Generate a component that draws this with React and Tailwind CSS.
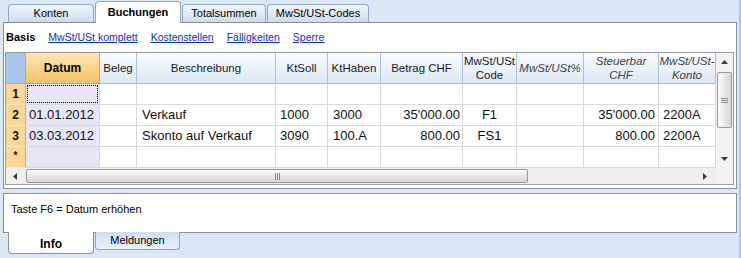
import React from "react";

function TriUp() {
  return (
    <svg width="7" height="4" viewBox="0 0 7 4"><path d="M3.5 0L7 4H0Z" fill="#3a3a3a" /></svg>
  );
}
function TriDown() {
  return (
    <svg width="7" height="4" viewBox="0 0 7 4"><path d="M0 0H7L3.5 4Z" fill="#3a3a3a" /></svg>
  );
}
function TriLeft() {
  return (
    <svg width="4" height="7" viewBox="0 0 4 7"><path d="M4 0V7L0 3.5Z" fill="#3a3a3a" /></svg>
  );
}
function TriRight() {
  return (
    <svg width="4" height="7" viewBox="0 0 4 7"><path d="M0 0V7L4 3.5Z" fill="#3a3a3a" /></svg>
  );
}

function HeaderRow() {
  const h =
    "shrink-0 h-full border-r border-b border-[#a9bfdc] bg-linear-to-b from-[#fafcfe] to-[#dce6f3] flex items-center justify-center text-center leading-[14px] text-[11.5px] text-[#1a1a1a]";
  const hi =
    "shrink-0 h-full border-r border-b border-[#a9bfdc] bg-linear-to-b from-[#fafcfe] to-[#dce6f3] flex items-center justify-center text-center leading-[14px] text-[11.5px] italic text-[#404040]";
  return (
    <div className="flex h-[31px]">
      <div className="w-[20px] shrink-0 h-full bg-[#a9c5ec] border-r border-b border-[#93b3de]" />
      <div className="w-[74px] shrink-0 h-full flex items-center justify-center font-bold text-[12px] bg-linear-to-b from-[#fde6b3] to-[#f6c161] border-r border-b border-[#f0993a]">
        Datum
      </div>
      <div className={`w-[37px] ${h}`}>Beleg</div>
      <div className={`w-[139px] ${h}`}>Beschreibung</div>
      <div className={`w-[52px] ${h}`}>KtSoll</div>
      <div className={`w-[53px] ${h}`}>KtHaben</div>
      <div className={`w-[82px] ${h}`}>Betrag CHF</div>
      <div className={`w-[54px] ${h}`}>
        MwSt/USt
        <br />
        Code
      </div>
      <div className={`w-[67px] ${hi}`}>MwSt/USt%</div>
      <div className={`w-[75px] ${hi}`}>
        Steuerbar
        <br />
        CHF
      </div>
      <div className={`w-[57px] ${hi}`}>
        MwSt/USt-
        <br />
        Konto
      </div>
    </div>
  );
}

function BodyRow({ n, datum = "", desc = "", soll = "", haben = "", betrag = "", code = "", steuer = "", konto = "", focus = false, star = false }) {
  const c = "shrink-0 h-full border-r border-b border-[#dadada] flex items-center whitespace-nowrap";
  return (
    <div className="flex h-[21px] text-[13px] text-[#111]">
      <div className="w-[20px] shrink-0 h-full flex items-center justify-center bg-[#fcd694] border-r border-r-[#f1a547] border-b border-b-[#fde7be] font-bold text-[12px]">
        {star ? <span className="text-[10px] -mt-[3px]">*</span> : n}
      </div>
      <div className={`w-[74px] ${c} bg-[#e6e6f6] border-b-[#d6d6e6] pl-[3px]`}>
        {focus ? <div className="self-stretch flex-1 -ml-[2px] my-px mr-px border border-dotted border-black" /> : datum}
      </div>
      <div className={`w-[37px] ${c}`} />
      <div className={`w-[139px] ${c} pl-[5px]`}>{desc}</div>
      <div className={`w-[52px] ${c} pl-[4px]`}>{soll}</div>
      <div className={`w-[53px] ${c} pl-[5px]`}>{haben}</div>
      <div className={`w-[82px] ${c} justify-end pr-[2px]`}>{betrag}</div>
      <div className={`w-[54px] ${c} justify-center`}>{code}</div>
      <div className={`w-[67px] ${c}`} />
      <div className={`w-[75px] ${c} justify-end pr-[3px]`}>{steuer}</div>
      <div className={`w-[57px] ${c} pl-[4px]`}>{konto}</div>
    </div>
  );
}

export default function App() {
  return (
    <div className="flex w-[741px] h-[258px] overflow-hidden bg-[#dce7f5] font-['Liberation_Sans',Arial,sans-serif] text-black">
      <div className="w-[739px] shrink-0 flex flex-col">
        {/* top tabs */}
        <div className="h-[22px] flex items-end pl-[8px] gap-[1px] text-[11px]">
          <div className="w-[86px] h-[18px] flex items-center justify-center rounded-t-[4px] border border-b-0 border-[#8ea6c8] bg-linear-to-b from-[#f3f7fc] to-[#cddbf0]">
            Konten
          </div>
          <div className="relative z-10 -mb-px w-[86px] h-[22px] flex items-center justify-center rounded-t-[4px] border border-b-0 border-[#9aa4b2] bg-white font-bold pb-[1px]">
            Buchungen
          </div>
          <div className="w-[84px] h-[18px] flex items-center justify-center rounded-t-[4px] border border-b-0 border-[#8ea6c8] bg-linear-to-b from-[#f3f7fc] to-[#cddbf0]">
            Totalsummen
          </div>
          <div className="w-[102px] h-[18px] flex items-center justify-center rounded-t-[4px] border border-b-0 border-[#8ea6c8] bg-linear-to-b from-[#f3f7fc] to-[#cddbf0]">
            MwSt/USt-Codes
          </div>
        </div>

        {/* main panel */}
        <div className="ml-[3px] w-[734px] h-[167px] shrink-0 border border-[#8d9196] bg-white flex flex-col">
          <div className="h-[29px] shrink-0 flex items-center pl-[2px] gap-[13px] text-[10.5px]">
            <span className="font-bold text-[11px]">Basis</span>
            <span className="text-[#0a2fd8] underline">MwSt/USt komplett</span>
            <span className="text-[#0a2fd8] underline">Kostenstellen</span>
            <span className="text-[#0a2fd8] underline">Fälligkeiten</span>
            <span className="text-[#0a2fd8] underline">Sperre</span>
          </div>

          {/* grid */}
          <div className="ml-px w-[729px] h-[133px] shrink-0 border border-[#9c9c9c] flex flex-col">
            <div className="flex h-[115px]">
              <div className="w-[710px] flex flex-col">
                <HeaderRow />
                <BodyRow n="1" focus />
                <BodyRow n="2" datum="01.01.2012" desc="Verkauf" soll="1000" haben="3000" betrag="35'000.00" code="F1" steuer="35'000.00" konto="2200A" />
                <BodyRow n="3" datum="03.03.2012" desc="Skonto auf Verkauf" soll="3090" haben="100.A" betrag="800.00" code="FS1" steuer="800.00" konto="2200A" />
                <BodyRow star />
              </div>
              {/* vertical scrollbar */}
              <div className="w-[17px] bg-[#f2f2f2] flex flex-col">
                <div className="h-[18px] flex items-center justify-center"><TriUp /></div>
                <div className="mt-px mx-px h-[56px] rounded-[2px] border border-[#9a9a9a] bg-linear-to-r from-[#fbfbfb] to-[#d6d6d6] flex items-center justify-center">
                  <svg width="7" height="7" viewBox="0 0 7 7">
                    <path d="M0 1.5H7M0 3.5H7M0 5.5H7" stroke="#8a8a8a" strokeWidth="1" />
                  </svg>
                </div>
                <div className="flex-1" />
                <div className="h-[19px] flex items-center justify-center"><TriDown /></div>
              </div>
            </div>
            {/* horizontal scrollbar */}
            <div className="flex h-[16px]">
              <div className="w-[710px] bg-[#efefef] flex">
                <div className="w-[20px] flex items-center justify-center pr-[2px]"><TriLeft /></div>
                <div className="w-[502px] my-px rounded-[2px] border border-[#9a9a9a] bg-linear-to-b from-[#fbfbfb] to-[#d6d6d6] flex items-center justify-center">
                  <svg width="7" height="7" viewBox="0 0 7 7">
                    <path d="M1.5 0V7M3.5 0V7M5.5 0V7" stroke="#8a8a8a" strokeWidth="1" />
                  </svg>
                </div>
                <div className="flex-1" />
                <div className="w-[18px] flex items-center justify-center pr-[4px]"><TriRight /></div>
              </div>
              <div className="w-[17px] bg-[#f2f2f2]" />
            </div>
          </div>
        </div>

        {/* info panel */}
        <div className="mt-[4px] ml-[3px] w-[734px] h-[40px] shrink-0 border border-[#8d9196] bg-white pl-[7px] pt-[8px] text-[11px] leading-[14px]">
          Taste F6 = Datum erhöhen
        </div>

        {/* bottom tabs */}
        <div className="flex items-start pl-[8px] gap-[1px]">
          <div className="relative z-10 -mt-px w-[86px] h-[22px] bg-white border border-t-0 border-[#8d9196] rounded-b-[4px] flex items-center justify-center font-bold text-[12px] pt-[2px]">
            Info
          </div>
          <div className="-mt-px w-[85px] h-[18px] border border-t-0 border-[#8ea6c8] rounded-b-[4px] bg-linear-to-b from-[#cfddf1] to-[#eaf0f9] flex items-center justify-center text-[11px]">
            Meldungen
          </div>
        </div>
      </div>
      <div className="w-[2px] h-full bg-[#a9c6ee]" />
    </div>
  );
}
